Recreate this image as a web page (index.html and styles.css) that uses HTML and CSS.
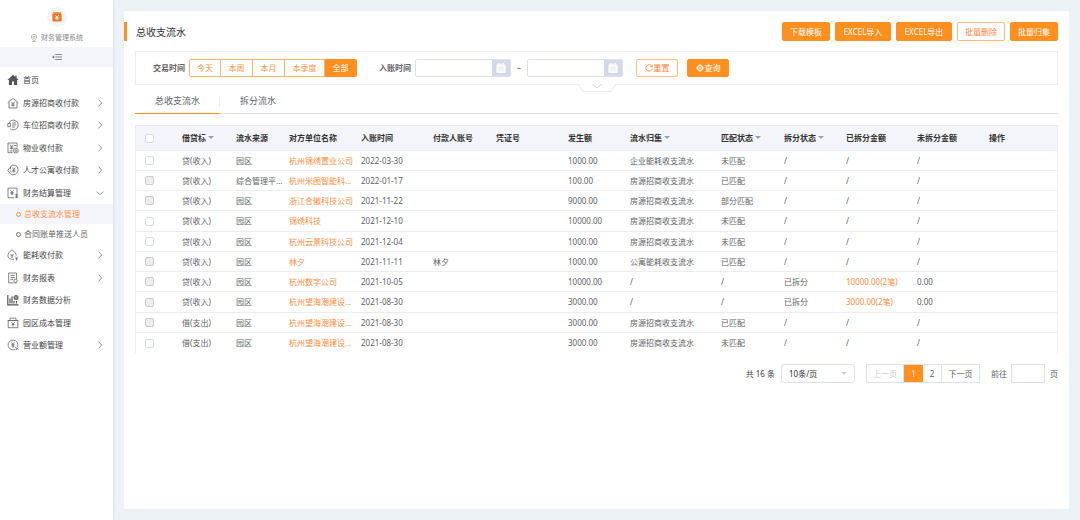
FILE: index.html
```html
<!DOCTYPE html>
<html lang="zh-CN">
<head>
<meta charset="utf-8">
<title>总收支流水</title>
<link rel="stylesheet" href="styles.css">
</head>
<body>
<div class="app">
  <aside class="sidebar">
    <div class="brand">
      <div class="logo">
        <svg viewBox="0 0 20 20" width="20" height="20"><rect x="6" y="5" width="8" height="1.4" fill="#ff9a5c"/><rect x="5.4" y="6.2" width="9.2" height="8.2" rx=".8" fill="#fa7121"/><path d="M8 8l2 2.1L12 8M10 10v3M8.300 10.400h3.400M8.300 11.900h3.400" stroke="#fff" stroke-width=".9" fill="none"/></svg>
      </div>
      <div class="system">
        <svg viewBox="0 0 8 8" width="8" height="8" fill="none" stroke="#999" stroke-width=".7"><path d="M4 6.700C2.200 5.300 1.300 4.300 1.300 3.100a2.700 2.700 0 0 1 5.400 0C6.700 4.300 5.800 5.300 4 6.700z"/><circle cx="4" cy="3.200" r="1.100"/><path d="M2 7.500h4"/></svg>
        <span>财务管理系统</span>
      </div>
    </div>
    <button class="collapse" aria-label="收起菜单">
      <svg viewBox="0 0 10 8" width="10" height="8"><path d="M0 4l2.200-1.800v3.600z" fill="#777"/><path d="M3.300 1.500H10M3.300 4H10M3.300 6.500H10" stroke="#888" stroke-width="1"/></svg>
    </button>
    <nav class="menu">
      <a class="item" href="#"><svg class="ico" viewBox="0 0 12 12"><path d="M6 .8L.5 6h1.400v5h3.100V7.500h2V11h3.100V6h1.400L9.600 4.100V1.500H8.300v1.400z" fill="#555"/></svg><span>首页</span></a>
      <a class="item" href="#"><svg class="ico line" viewBox="0 0 12 12"><path d="M.7 5.600L6 1.300l5.300 4.300M2 5v6h8V5M4.300 4.800L6 6.600l1.700-1.800M6 6.600V9.700M4.500 7h3M4.500 8.400h3"/></svg><span>房源招商收付款</span><svg class="arrow" viewBox="0 0 8 8"><path d="M2.500 .6L5.700 4 2.500 7.400"/></svg></a>
      <a class="item" href="#"><svg class="ico line" viewBox="0 0 12 12"><path d="M2 4.300A4.600 4.600 0 0 1 6.300 1.100c2.800 0 4.900 2.200 4.900 4.900s-2.100 4.900-4.900 4.900c-1.400 0-2.500-.5-3.300-1.400M.8 4.500h2.700v3.200H.8zM5 4h4M5 6h4M5 8h3"/></svg><span>车位招商收付款</span><svg class="arrow" viewBox="0 0 8 8"><path d="M2.500 .6L5.700 4 2.500 7.400"/></svg></a>
      <a class="item" href="#"><svg class="ico line" viewBox="0 0 12 12"><path d="M5.500 10.700H1V1h9v4.500M3 2.500l1.600 1.900 1.600-1.900M4.600 4.400v3M3 5h3.300M3 6.400h3.300M2.500 9h3M7 3.500h2"/><circle cx="8.800" cy="8.600" r="2.400"/><circle cx="8.800" cy="8.600" r=".9"/></svg><span>物业收付款</span><svg class="arrow" viewBox="0 0 8 8"><path d="M2.500 .6L5.700 4 2.500 7.400"/></svg></a>
      <a class="item" href="#"><svg class="ico line" viewBox="0 0 12 12"><path d="M3.500 3C4.200 1.700 5.300 1.100 6.700 1.100c2.500 0 4.300 2.100 4.300 4.700s-1.900 4.900-4.600 4.900c-1.400 0-2.400-.5-3.200-1.500L.7 6.500 3.500 3v2M5.200 3.500L6.800 5.400l1.600-1.900M6.800 5.400v3.200M5.300 6h3M5.300 7.300h3M3 6.400l1.500 2"/></svg><span>人才公寓收付款</span><svg class="arrow" viewBox="0 0 8 8"><path d="M2.500 .6L5.700 4 2.500 7.400"/></svg></a>
      <a class="item" href="#"><svg class="ico line" viewBox="0 0 12 12"><path d="M7 10.700H1V1.200h9V6M3.500 3.200L5 4.900l1.500-1.700M5 4.900V8M3.400 5.400h3.200M3.400 6.800h3.200M8.300 7.400h2.900M8.300 9h2.900M8.300 10.600h2.900M9.700 6.500v4.500"/></svg><span>财务结算管理</span><svg class="arrow" viewBox="0 0 8 8"><path d="M.6 2.500L4 5.700l3.400-3.200"/></svg></a>
      <a class="sub active" href="#"><i></i><span>总收支流水管理</span></a>
      <a class="sub" href="#"><i></i><span>合同账单推送人员</span></a>
      <a class="item" href="#"><svg class="ico line" viewBox="0 0 12 12"><path d="M5 .8C8 3 9.200 4.800 9.200 6.500M7 10.200C3.500 11 .9 9 .9 6.500.9 4.500 2.500 2.500 5 .8M3.300 4.800L5 6.500l1.700-1.700M5 6.500V9M3.500 6.800h3M8.200 7.500l1.300 1.400 1.300-1.400M9.500 8.900v2.600M8.300 9.700h2.500"/></svg><span>能耗收付款</span><svg class="arrow" viewBox="0 0 8 8"><path d="M2.500 .6L5.700 4 2.500 7.400"/></svg></a>
      <a class="item" href="#"><svg class="ico line" viewBox="0 0 12 12"><path d="M6.500 10.900H1.700V1h7.800v6M3.500 3.400h4.300M3.500 5.500h4.300M3.500 7.600h2.500"/><circle cx="8.500" cy="8.900" r="1.700"/><path d="M7.500 11h2"/></svg><span>财务报表</span><svg class="arrow" viewBox="0 0 8 8"><path d="M2.500 .6L5.700 4 2.500 7.400"/></svg></a>
      <a class="item" href="#"><svg class="ico" viewBox="0 0 12 12"><path d="M.8 1v9.800h10.700M3 9.500V4.500M5 9.500V2.500M7 9.500V7M9.500 9.500V7" stroke="#555" stroke-width="1.200" fill="none"/><circle cx="9" cy="3.500" r="2.500" fill="#666"/><path d="M8 2.500l1 1.200 1-1.200M9 3.700V5" stroke="#fff" stroke-width=".6" fill="none"/></svg><span>财务数据分析</span></a>
      <a class="item" href="#"><svg class="ico line" viewBox="0 0 12 12"><path d="M1.200 3.500h9.600v7.200H1.200zM3 3.300V1.200h6v2.100M.7 3.500h10.600M4.300 5.200L6 6.900l1.700-1.700M6 6.900v2.600M4.500 7.500h3"/></svg><span>园区成本管理</span></a>
      <a class="item" href="#"><svg class="ico line" viewBox="0 0 12 12"><path d="M8.500 10.200a4.900 4.900 0 1 1 2-2.300M4.300 3.400L6 5.300l1.700-1.900M6 5.300v3.400M4.400 5.700h3.200M4.400 7.100h3.200M8 8l3.500 2.500M11 8.500l-2 2.500"/></svg><span>营业额管理</span><svg class="arrow" viewBox="0 0 8 8"><path d="M2.500 .6L5.700 4 2.500 7.400"/></svg></a>
    </nav>
  </aside>
  <main class="main">
    <section class="card">
      <header class="head">
        <h1>总收支流水</h1>
        <div class="actions">
          <button class="btn primary">下载模板</button>
          <button class="btn primary excel">EXCEL导入</button>
          <button class="btn primary excel">EXCEL导出</button>
          <button class="btn plain">批量删除</button>
          <button class="btn primary">批量归集</button>
        </div>
      </header>
      <div class="content">
        <form class="filter">
          <span class="label">交易时间</span>
          <div class="segments">
            <button type="button">今天</button><button type="button">本周</button><button type="button">本月</button><button type="button" class="quarter">本季度</button><button type="button" class="on">全部</button>
          </div>
          <label class="label second" for="from">入账时间</label>
          <span class="date"><input id="from" type="text"><svg viewBox="0 0 18 18"><path d="M4 5h2V3.500h1.500V5h3V3.500H12V5h2v9.500H4z" fill="#fff"/><path d="M5.500 8h7M5.500 10h7M5.500 12h7M7.700 7v6M10.300 7v6" stroke="#d2d9e7" stroke-width=".4"/></svg></span>
          <span class="dash">–</span>
          <span class="date"><input type="text" aria-label="入账结束时间"><svg viewBox="0 0 18 18"><path d="M4 5h2V3.500h1.500V5h3V3.500H12V5h2v9.500H4z" fill="#fff"/><path d="M5.500 8h7M5.500 10h7M5.500 12h7M7.700 7v6M10.300 7v6" stroke="#d2d9e7" stroke-width=".4"/></svg></span>
          <button type="reset" class="btn plain tool reset"><svg viewBox="0 0 8 8"><path d="M6.600 2A3.200 3.200 0 1 0 7.200 4.600M7.200 .8v1.900H5.200" fill="none" stroke="#ff8020" stroke-width=".9"/></svg>重置</button>
          <button type="button" class="btn primary tool query"><svg viewBox="0 0 8 8"><circle cx="4" cy="4" r="2.500" fill="none" stroke="#fff" stroke-width="1.100"/><circle cx="4" cy="4" r=".8" fill="#fff"/><path d="M4 0v2.500M4 5.500V8M0 4h2.500M5.500 4H8" stroke="#fff" stroke-width="1.100"/></svg>查询</button>
          <button type="button" class="expand" aria-label="展开筛选"><svg viewBox="0 0 38 9" width="38" height="9"><path d="M0 0l5 7.500h28L38 0" fill="#fff" stroke="#e8eaee"/><path d="M14.500 0l4.500 4 4.500-4" fill="none" stroke="#cdd2e0"/></svg></button>
        </form>
        <div class="tabs" role="tablist">
          <button role="tab" aria-selected="true" class="tab on">总收支流水</button>
          <button role="tab" aria-selected="false" class="tab">拆分流水</button>
        </div>
        <table class="grid">
          <colgroup><col class="w41"><col class="w54"><col class="w53"><col class="w72"><col class="w72"><col class="w63"><col class="w72"><col class="w62"><col class="w91"><col class="w63"><col class="w62"><col class="w71"><col class="w72"><col class="w73"></colgroup>
          <thead><tr><th><input type="checkbox" aria-label="全选"></th><th class="sort">借贷标</th><th>流水来源</th><th>对方单位名称</th><th>入账时间</th><th>付款人账号</th><th>凭证号</th><th>发生额</th><th class="sort">流水归集</th><th class="sort">匹配状态</th><th class="sort">拆分状态</th><th>已拆分金额</th><th>未拆分金额</th><th>操作</th></tr></thead>
          <tbody>
            <tr><td><input type="checkbox" aria-label="选择第1行"></td><td>贷(收入)</td><td>园区</td><td><a href="#">杭州锦绣置业公司</a></td><td>2022-03-30</td><td></td><td></td><td>1000.00</td><td>企业能耗收支流水</td><td>未匹配</td><td>/</td><td>/</td><td>/</td><td></td></tr>
            <tr><td><input type="checkbox" disabled aria-label="选择第2行"></td><td>贷(收入)</td><td>综合管理平...</td><td><a href="#">杭州米图智能科...</a></td><td>2022-01-17</td><td></td><td></td><td>100.00</td><td>房源招商收支流水</td><td>已匹配</td><td>/</td><td>/</td><td>/</td><td></td></tr>
            <tr><td><input type="checkbox" disabled aria-label="选择第3行"></td><td>贷(收入)</td><td>园区</td><td><a href="#">浙江合徽科技公司</a></td><td>2021-11-22</td><td></td><td></td><td>9000.00</td><td>房源招商收支流水</td><td>部分匹配</td><td>/</td><td>/</td><td>/</td><td></td></tr>
            <tr><td><input type="checkbox" aria-label="选择第4行"></td><td>贷(收入)</td><td>园区</td><td><a href="#">锦绣科技</a></td><td>2021-12-10</td><td></td><td></td><td>10000.00</td><td>房源招商收支流水</td><td>未匹配</td><td>/</td><td>/</td><td>/</td><td></td></tr>
            <tr><td><input type="checkbox" aria-label="选择第5行"></td><td>贷(收入)</td><td>园区</td><td><a href="#">杭州云景科技公司</a></td><td>2021-12-04</td><td></td><td></td><td>1000.00</td><td>房源招商收支流水</td><td>未匹配</td><td>/</td><td>/</td><td>/</td><td></td></tr>
            <tr><td><input type="checkbox" disabled aria-label="选择第6行"></td><td>贷(收入)</td><td>园区</td><td><a href="#">林夕</a></td><td>2021-11-11</td><td>林夕</td><td></td><td>1000.00</td><td>公寓能耗收支流水</td><td>已匹配</td><td>/</td><td>/</td><td>/</td><td></td></tr>
            <tr><td><input type="checkbox" disabled aria-label="选择第7行"></td><td>贷(收入)</td><td>园区</td><td><a href="#">杭州数字公司</a></td><td>2021-10-05</td><td></td><td></td><td>10000.00</td><td>/</td><td>/</td><td>已拆分</td><td><a href="#">10000.00(2笔)</a></td><td>0.00</td><td></td></tr>
            <tr><td><input type="checkbox" disabled aria-label="选择第8行"></td><td>贷(收入)</td><td>园区</td><td><a href="#">杭州望海潮建设...</a></td><td>2021-08-30</td><td></td><td></td><td>3000.00</td><td>/</td><td>/</td><td>已拆分</td><td><a href="#">3000.00(2笔)</a></td><td>0.00</td><td></td></tr>
            <tr><td><input type="checkbox" disabled aria-label="选择第9行"></td><td>借(支出)</td><td>园区</td><td><a href="#">杭州望海潮建设...</a></td><td>2021-08-30</td><td></td><td></td><td>3000.00</td><td>房源招商收支流水</td><td>已匹配</td><td>/</td><td>/</td><td>/</td><td></td></tr>
            <tr><td><input type="checkbox" aria-label="选择第10行"></td><td>借(支出)</td><td>园区</td><td><a href="#">杭州望海潮建设...</a></td><td>2021-08-30</td><td></td><td></td><td>3000.00</td><td>房源招商收支流水</td><td>未匹配</td><td>/</td><td>/</td><td>/</td><td></td></tr>
          </tbody>
        </table>
        <footer class="pagination">
          <span class="total">共 16 条</span>
          <span class="size"><select aria-label="每页条数"><option>10条/页</option><option>20条/页</option></select></span>
          <div class="pages"><button class="wide" disabled>上一页</button><button class="on">1</button><button>2</button><button class="wide">下一页</button></div>
          <label for="jump">前往</label><input id="jump" class="jump" type="text"><span class="unit">页</span>
        </footer>
      </div>
    </section>
  </main>
</div>
</body>
</html>
```
FILE: styles.css
```css
* { box-sizing: border-box; }
body {
  margin: 0;
  font: 8px/12px "Noto Sans", "Noto Sans CJK SC", sans-serif;
  color: #606266;
  background: #edf2f6;
}
button, input, select { font: inherit; color: inherit; margin: 0; padding: 0; }
button { cursor: pointer; background: none; border: 0; white-space: nowrap; }
a { color: inherit; text-decoration: none; }
.app { display: flex; min-height: 100vh; }

/* Sidebar */
.sidebar {
  flex: 0 0 113px;
  background: #fff;
  box-shadow: 0 0 3px rgba(0, 0, 0, .12);
}
.brand { display: flex; flex-direction: column; align-items: center; height: 47px; padding-top: 7px; }
.logo { display: flex; border-radius: 50%; background: #f6f6f6; }
.system { display: flex; align-items: center; gap: 3px; margin-top: 5px; font-size: 7px; color: #888; }
.collapse {
  display: flex;
  align-items: center;
  justify-content: center;
  width: 100%;
  height: 20px;
  background: #f3f5fa;
}
.menu { padding-top: 2px; }
.item { display: flex; align-items: center; height: 22px; padding: 0 9px 0 7px; gap: 4px; color: #444; }
.item:nth-child(even) { height: 23px; }
.ico { width: 12px; height: 12px; flex: none; }
.line { fill: none; stroke: #666; stroke-width: .8; }
.arrow { width: 8px; height: 8px; margin-left: auto; fill: none; stroke: #888; stroke-width: .9; }
.sub { display: flex; align-items: center; height: 20px; padding-left: 16px; gap: 3px; }
.sub i { width: 5px; height: 5px; border: 1px solid #777; border-radius: 50%; }
.sub.active { background: #f3f5fa; color: #ff9040; }
.sub.active i { border-color: #ff9040; }

/* Card */
.main { flex: 1; min-width: 0; display: flex; padding: 11px; }
.card { flex: 1; min-width: 0; padding: 11px 0; background: #fff; }
.head {
  display: flex;
  align-items: center;
  justify-content: space-between;
  height: 19px;
  padding: 0 11px 0 9px;
  border-left: 3px solid #ff9020;
}
h1 { margin: 0; font-size: 10px; font-weight: 400; color: #333; }
.actions { display: flex; gap: 5px; }
.btn { height: 19px; padding: 0 7px; border: 1px solid #ff9020; border-radius: 2px; }
.excel { min-width: 56px; }
.primary { background: #ff9020; color: #fff; }
.plain { background: #fff; border-color: #ffbd78; color: #ff8540; }
.content { padding: 10px 11px 0; }

/* Filter */
.filter {
  position: relative;
  display: flex;
  align-items: center;
  height: 34px;
  padding-left: 17px;
  border: 1px solid #eceef1;
}
.label { font-weight: 700; margin-right: 4px; }
.second { margin-left: 22px; }
.segments { display: flex; height: 18px; }
.segments button { width: 32px; color: #ff9040; border: 1px solid #ffb366; border-left-width: 0; }
.segments .quarter { width: 40px; }
.segments button:first-child { border-left-width: 1px; border-radius: 2px 0 0 2px; }
.segments .on { background: #ff9020; border-color: #ff9020; color: #fff; border-radius: 0 2px 2px 0; }
.date { display: flex; width: 96px; height: 18px; border: 1px solid #dde1ea; border-radius: 2px; overflow: hidden; }
.date input { flex: 1; min-width: 0; border: 0; outline: 0; }
.date svg { width: 18px; height: 16px; background: #d2d9e7; }
.dash { width: 16px; text-align: center; }
.tool { display: flex; align-items: center; justify-content: center; width: 42px; height: 18px; padding: 0; gap: 1px; }
.tool svg { width: 8px; height: 8px; }
.reset { margin-left: 13px; }
.query { margin-left: 9px; }
.expand { position: absolute; left: 48%; top: 32px; height: 9px; }
.expand svg { display: block; }

/* Tabs */
.tabs { display: flex; height: 29px; border-bottom: 1px solid #dfe2e6; }
.tab { position: relative; height: 29px; padding: 3px 20px 0; font-size: 9px; }
.tab.on { border-bottom: 1px solid #ff9020; }
.tab.on::after { content: ""; position: absolute; right: 0; top: 11px; height: 11px; border-right: 1px solid #e8eaee; }

/* Table */
.grid {
  width: 100%;
  margin-top: 11px;
  table-layout: fixed;
  border-collapse: separate;
  border-spacing: 0;
  border: solid #eceef1;
  border-width: 0 1px;
}
.w41 { width: 41px; } .w53 { width: 53px; } .w54 { width: 54px; }
.w62 { width: 62px; } .w63 { width: 63px; } .w71 { width: 71px; }
.w72 { width: 72px; } .w73 { width: 73px; } .w91 { width: 91px; }
.grid th, .grid td { padding: 0 0 0 5px; text-align: left; white-space: nowrap; }
.grid th { height: 26px; background: #f3f5fa; color: #333; font-weight: 700; border: solid #eaecf1; border-width: 1px 0; }
.grid td { height: 20px; border-bottom: 1px solid #ebedf0; }
.grid tr:nth-child(4n) td { height: 21px; }
.grid tr:last-child td { border-bottom: 0; }
.grid th:first-child, .grid td:first-child { padding: 0 0 0 9px; }
.grid a { color: #ff8d3c; }
.sort::after {
  content: "";
  display: inline-block;
  margin-left: 2px;
  vertical-align: 2px;
  border: solid transparent;
  border-width: 3px 3px 0;
  border-top-color: #8fa0bd;
}
.grid input {
  display: block;
  appearance: none;
  width: 9px;
  height: 9px;
  border: 1px solid #d5dce8;
  border-radius: 2px;
  background: #fff;
}
.grid input:disabled { background: #ededed; border-color: #ccc; }

/* Pagination */
.pagination { display: flex; align-items: center; justify-content: flex-end; padding-top: 11px; }
.total { margin-right: 6px; color: #444; }
.size { position: relative; display: flex; margin-right: 11px; color: #333; }
.size select { appearance: none; width: 74px; height: 19px; padding-left: 7px; border: 1px solid #dde1ea; border-radius: 3px; background: #fff; }
.size::after { content: ""; position: absolute; right: 8px; top: 8px; border: solid transparent; border-width: 3px 3px 0; border-top-color: #c9cfda; }
.pages { display: flex; height: 19px; margin-right: 11px; border: 1px solid #dde1ea; }
.pages button { width: 19px; border-right: 1px solid #dde1ea; }
.pages .wide { width: 37px; }
.pages button:last-child { border-right: 0; }
.pages button:disabled { color: #c5cad4; }
.pages .on { background: #ff9020; color: #fff; border: 0; }
.jump { width: 34px; height: 19px; margin: 0 5px 0 4px; border: 1px solid #dde1ea; }
```
